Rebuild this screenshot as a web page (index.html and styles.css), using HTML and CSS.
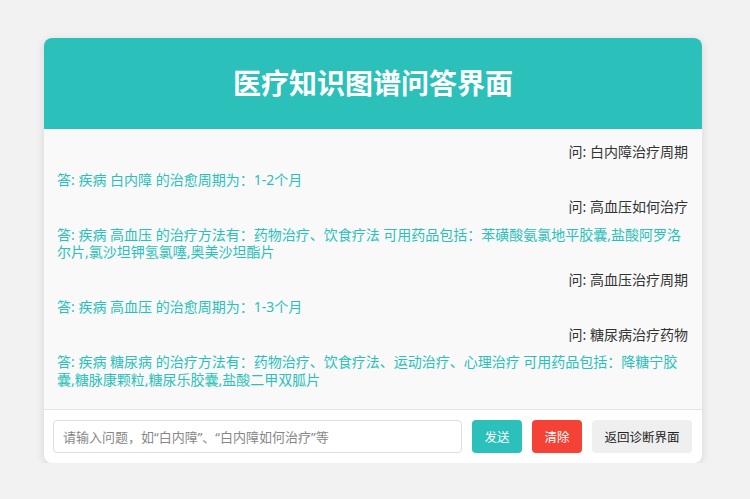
FILE: index.html
```html
<!DOCTYPE html>
<html lang="zh-CN">
<head>
    <meta charset="utf-8">
    <meta name="viewport" content="width=device-width, initial-scale=1.0">
    <title>医疗知识图谱问答界面</title>
    <link rel="stylesheet" href="styles.css">
</head>
<body>
    <div class="chat-container">
        <div class="chat-header">
            <h1>医疗知识图谱问答界面</h1>
        </div>

        <div class="chat-box" id="chat-box">
            <div class="message user">问: 白内障治疗周期</div>
            <div class="message bot">答: 疾病 白内障 的治愈周期为：1-2个月</div>
            <div class="message user">问: 高血压如何治疗</div>
            <div class="message bot">答: 疾病 高血压 的治疗方法有：药物治疗、饮食疗法 可用药品包括：苯磺酸氨氯地平胶囊,盐酸阿罗洛尔片,氯沙坦钾氢氯噻,奥美沙坦酯片</div>
            <div class="message user">问: 高血压治疗周期</div>
            <div class="message bot">答: 疾病 高血压 的治愈周期为：1-3个月</div>
            <div class="message user">问: 糖尿病治疗药物</div>
            <div class="message bot">答: 疾病 糖尿病 的治疗方法有：药物治疗、饮食疗法、运动治疗、心理治疗 可用药品包括：降糖宁胶囊,糖脉康颗粒,糖尿乐胶囊,盐酸二甲双胍片</div>
        </div>

        <div class="chat-input">
            <input type="text" id="question" placeholder="请输入问题，如“白内障”、“白内障如何治疗”等">
            <button class="btn-send">发送</button>
            <button class="btn-clear">清除</button>
            <button class="btn-back">返回诊断界面</button>
        </div>
    </div>
</body>
</html>
```

FILE: styles.css
```css
/* ページ全体 */
body {
    margin: 0;
    padding: 38px 48px 0 44px;
    background-color: #f2f2f2;
    font-family: "Noto Sans", "Noto Sans CJK SC", sans-serif;
    color: #333;
}

/* カード */
.chat-container {
    background-color: #fff;
    border-radius: 8px;
    box-shadow: 0 2px 10px rgba(0, 0, 0, 0.12);
    overflow: hidden;
}

/* 見出し */
.chat-header {
    background-color: #2bc0b9;
    padding: 28px 0 29px;
    text-align: center;
}

.chat-header h1 {
    margin: 0;
    font-size: 28px;
    line-height: 34px;
    font-weight: bold;
    color: #fff;
}

/* メッセージ */
.chat-box {
    height: 281px;
    box-sizing: border-box;
    padding: 14px 14px 0 13px;
    background-color: #f9f9f9;
    border-bottom: 1px solid #e4e4e4;
    overflow-y: auto;
}

.message {
    font-size: 14px;
    line-height: 17.5px;
    margin-bottom: 10px;
}

.message.user {
    text-align: right;
    color: #333;
}

.message.bot {
    text-align: left;
    color: #2bc0b9;
}

/* 入力欄 */
.chat-input {
    display: flex;
    gap: 10px;
    padding: 10px 10px 10px 9px;
}

.chat-input input {
    flex: 1;
    height: 33px;
    box-sizing: border-box;
    padding: 0 9px;
    border: 1px solid #ddd;
    border-radius: 4px;
    font-family: inherit;
    font-size: 13px;
    color: #333;
}

.chat-input input::placeholder {
    color: #888;
}

.chat-input button {
    height: 33px;
    padding: 0 12.5px;
    border: none;
    border-radius: 4px;
    font-family: inherit;
    font-size: 12.5px;
    cursor: pointer;
}

.btn-send {
    background-color: #2bc0b9;
    color: #fff;
}

.btn-clear {
    background-color: #f44336;
    color: #fff;
}

.btn-back {
    background-color: #efefef;
    color: #222;
}
```
